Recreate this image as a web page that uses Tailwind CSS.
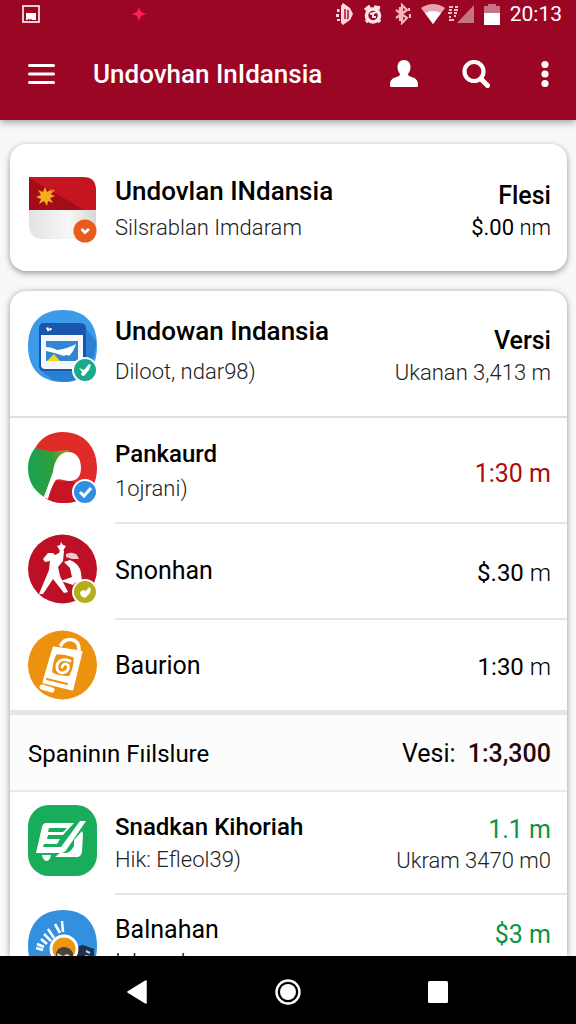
<!DOCTYPE html>
<html lang="id">
<head>
<meta charset="utf-8">
<meta name="viewport" content="width=device-width, initial-scale=1">
<title>Undovhan InIdansia</title>
<script src="https://cdn.jsdelivr.net/npm/@tailwindcss/browser@4"></script>
</head>
<body class="flex h-screen flex-col overflow-hidden bg-[#f8f8f9] font-['Roboto',sans-serif] text-black">

<header class="z-10 shrink-0 bg-[#9b0624] text-white shadow-[0_2px_8px_rgba(0,0,0,0.4)]">
  <div class="flex h-7 items-center pr-3.5 pl-[22px]">
    <svg class="size-[18px]" viewBox="0 0 18 18" aria-hidden="true"><rect x="1" y="1" width="16" height="16" fill="none" stroke="#fff" stroke-width="1.6"/><path d="M4 8h10v7H4z" fill="#fff"/><path d="M5.500 15l1-1.500 1.500 1.500 1-1.500 1 1.500" fill="#9b0624"/></svg>
    <svg class="ml-[92px] size-[14px]" viewBox="0 0 14 14" aria-hidden="true"><path d="M7 0l2 5 5 2-5 2-2 5-2-5-5-2 5-2z" fill="#ff2058"/></svg>
    <div class="ml-auto flex items-center">
      <svg class="h-[22px] w-5" viewBox="0 0 20 22" fill="#fbd9df" aria-hidden="true"><path d="M2 6h2.500v3H2zM1 11h3v3H1zM2 16h3v2H2zM8 0l7 5 3 6-3 6-7 5-2-2V3z"/><path d="M10 6v10M13 7v8l-1 1" stroke="#9b0624" stroke-width="1.400" fill="none"/></svg>
      <svg class="ml-2 h-[22px] w-5" viewBox="0 0 20 22" fill="none" aria-hidden="true"><circle cx="10" cy="12.500" r="6.500" stroke="#fde5e9" stroke-width="3.600"/><path d="M2 7l5-4M11 4l6 1M3 19l2-2M17 19l-2-2" stroke="#fde5e9" stroke-width="3.400"/><path d="M7 11l7-2M10 11v3h3" stroke="#fde5e9" stroke-width="2"/></svg>
      <svg class="ml-2.5 h-[22px] w-5" viewBox="0 0 20 22" fill="none" stroke="#f3b6c1" stroke-width="2.200" aria-hidden="true"><path d="M3 7l11 8-5 5V2l5 5L3 15M7 4v14M16 5v3M17 11v4"/></svg>
      <svg class="ml-2 h-5 w-6" viewBox="0 0 24 20" aria-hidden="true"><path d="M0 4Q12-4 24 4L12 20z" fill="#e7a5b1"/><path d="M4 9Q12 5 20 9L12 20z" fill="#fff"/></svg>
      <svg class="ml-0.5 h-5 w-[27px]" viewBox="0 0 27 20" aria-hidden="true"><path d="M27 1v18H10z" fill="#c57483"/><path d="M2 3h4M8 3h3M2 6h3M7 6h4M1 9h4M7 9h3M2 13h2M7 12h2M2 16h5" stroke="#f3bec7" stroke-width="1.800"/></svg>
      <svg class="ml-2.5 h-[21px] w-4" viewBox="0 0 16 21" aria-hidden="true"><path d="M4 0h8v2h4v8H0V2h4z" fill="#c57483"/><path d="M0 9h16v12H0z" fill="#fff"/></svg>
      <time class="ml-2.5 text-[21px] leading-7">20:13</time>
    </div>
  </div>
  <div class="flex h-[92px] items-center pr-[27px] pl-7">
    <button type="button" aria-label="Menu"><svg class="h-[22px] w-[27px]" viewBox="0 0 27 22" stroke="#fff" stroke-width="3" stroke-linecap="round" aria-hidden="true"><path d="M1.500 2.500h24M1.500 11h24M1.500 19.500h24"/></svg></button>
    <h1 class="ml-[38px] text-[26px] font-medium">Undovhan InIdansia</h1>
    <button type="button" class="ml-auto" aria-label="Akun"><svg class="size-7" viewBox="0 0 28 28" fill="#fff" aria-hidden="true"><path d="M14 0c4 0 6.500 3 6.500 7 0 3-1 5-2.500 7 0 2 2 2.500 5 3.500 4 1.500 5 4 5 8 0 1-.5 1.500-1.500 1.500h-25C.5 27 0 26.500 0 25.500c0-4 1-6.500 5-8 3-1 5-1.500 5-3.500-1.500-2-2.500-4-2.500-7C7.500 3 10 0 14 0z"/></svg></button>
    <button type="button" class="ml-11" aria-label="Cari"><svg class="size-7" viewBox="0 0 28 28" fill="none" stroke="#fff" stroke-linecap="round" aria-hidden="true"><circle cx="12" cy="11.500" r="9.500" stroke-width="4.200"/><path d="M19 19l6.500 6.500" stroke-width="5"/></svg></button>
    <button type="button" class="ml-[51px]" aria-label="Opsi lainnya"><svg class="h-7 w-2" viewBox="0 0 8 28" fill="#fff" aria-hidden="true"><circle cx="4" cy="4.500" r="3.600"/><circle cx="4" cy="14" r="3.600"/><circle cx="4" cy="23.500" r="3.600"/></svg></button>
  </div>
</header>

<main class="flex min-h-0 flex-1 flex-col gap-5 overflow-hidden pt-6 pr-[9px] pl-2.5">

  <section class="flex h-[127px] shrink-0 items-center rounded-2xl bg-white pr-4 pl-[18px] shadow-[0_2px_6px_rgba(0,0,0,0.4)]">
    <div class="relative shrink-0">
      <svg class="h-[62px] w-[69px]" viewBox="0 0 69 62" aria-hidden="true">
        <defs><linearGradient id="cloth"><stop offset="0" stop-color="#e2e2e4"/><stop offset=".6" stop-color="#f7f7f7"/><stop offset="1" stop-color="#d5d5d7"/></linearGradient></defs>
        <path d="M1 0h54q13 0 13 13v20H1z" fill="#c51521"/><path d="M1 1l55 32H1z" fill="#a30d18"/>
        <path d="M1 33h67v16q0 13-13 13H15Q1 62 1 47z" fill="url(#cloth)"/>
        <path d="M17 10l2 5 5-3-2 5 5 2-5 2 3 5-5-2-1 5-3-5-5 3 2-5-5-2 5-2-3-5 5 2z" fill="#f3ae1c"/><path d="M22 17l4-4" stroke="#f3ae1c" stroke-width="1.500"/>
      </svg>
      <svg class="absolute right-0 -bottom-1 size-6" viewBox="0 0 24 24" aria-hidden="true"><circle cx="12" cy="12" r="11.500" fill="#ea5b1b"/><path d="M8.500 10l3.500 3.500 4-3.500" fill="none" stroke="#fff" stroke-width="2.800"/></svg>
    </div>
    <div class="ml-[18px] min-w-0 flex-1 pt-1">
      <h2 class="text-[26px] leading-9 font-medium">Undovlan INdansia</h2>
      <p class="text-[22px] leading-[38px] font-light text-[#222]">Silsrablan Imdaram</p>
    </div>
    <div class="pt-2 text-right text-[22px] leading-8">
      <p class="text-[25px] font-medium">Flesi</p>
      <p class="font-light"><span class="font-normal">$.00</span> nm</p>
    </div>
  </section>

  <section class="min-h-0 flex-1 overflow-hidden rounded-t-2xl bg-white shadow-[0_1px_6px_rgba(0,0,0,0.4)]">
    <div class="flex h-[127px] items-start border-b-2 border-[#dedfe1] pr-4 pl-[18px]">
      <div class="relative mt-[18px] shrink-0">
        <svg class="h-[74px] w-[69px]" viewBox="0 0 69 74" aria-hidden="true">
          <path d="M35 1c22 0 34 13 34 36S57 73 35 73 0 60 0 37 13 1 35 1z" fill="#3b9bea"/>
          <path d="M58 20l10 12q0 20-13 32l-8 7q-10 4-22 0L12 61z" fill="#2a80d0"/>
          <path d="M16 14h36q6 0 6 6v42H16q-5 0-5-5V19q0-5 5-5z" fill="#1b56ad"/>
          <path d="M13 26h42v34H17q-4 0-4-4z" fill="#f4f7fb"/><path d="M18 32h32v20H18z" fill="#3285cf"/>
          <path d="M18 38q6 0 11 3 10-1 19-6-2 7-7 12-2-2-5 0-8-3-18-5z" fill="#fff"/><path d="M19 52l7-7 6 7z" fill="#f7d51e"/><path d="M18 19q3-2 3 1 2-2 3 0l-2 2-1-1-1 2" fill="#fff"/>
        </svg>
        <svg class="absolute -right-px bottom-0 size-[26px]" viewBox="0 0 26 26" aria-hidden="true"><circle cx="13" cy="13" r="12" fill="#1aa98b" stroke="#fff" stroke-width="2"/><path d="M7 11l5 2 5-6 2 1-2 5-5 6-3-1 1-3z" fill="#fff"/></svg>
      </div>
      <div class="ml-[18px] min-w-0 flex-1 pt-5">
        <h2 class="text-[26px] leading-10 font-medium">Undowan Indansia</h2>
        <p class="text-[22px] leading-[42px] font-light text-[#222]">Diloot, ndar98)</p>
      </div>
      <div class="pt-[34px] text-right text-[22px] leading-8">
        <p class="text-[25px] font-medium">Versi</p>
        <p class="font-light text-[#222]">Ukanan 3,413 m</p>
      </div>
    </div>

    <div class="flex h-[106px] pl-[18px]">
      <div class="relative mt-3.5 h-[72px] shrink-0">
        <svg class="h-[72px] w-[69px]" viewBox="0 0 69 72" aria-hidden="true">
          <defs><linearGradient id="leaf"><stop offset="0" stop-color="#17a253"/><stop offset=".6" stop-color="#2f9f3c"/><stop offset="1" stop-color="#a7a51f"/></linearGradient></defs>
          <path d="M35 0c20 0 34 14 34 36S55 71 35 71q-11 0-18-5L35 36 6 18Q15 0 35 0z" fill="#e02c29"/>
          <path d="M7 16q14 5 34 2L25 41 16 65Q0 55 0 36 0 25 7 16z" fill="url(#leaf)"/>
          <path d="M27 47q7 5 16 0l16 18q-10 6-24 6-9 0-17-5z" fill="#c71525"/>
          <path d="M40 20c9 0 13 7 13 16 0 8-4 13-11 13-6 0-11-3-14-1-3 3-6 12-8 19l-4-2 9-25c1-10 6-20 15-20z" fill="#fff"/>
        </svg>
        <svg class="absolute -right-px -bottom-px size-[26px]" viewBox="0 0 26 26" aria-hidden="true"><circle cx="13" cy="13" r="12" fill="#318ee5" stroke="#fff" stroke-width="2"/><path d="M8 13l4 4 7-8" fill="none" stroke="#fff" stroke-width="3"/></svg>
      </div>
      <div class="ml-[18px] flex flex-1 items-center border-b-2 border-[#e4e5e7] pr-4">
        <div class="min-w-0 flex-1 pt-0.5"><h3 class="text-[24px] leading-9 font-medium">Pankaurd</h3><p class="text-[22px] leading-[34px] font-light text-[#222]">1ojrani)</p></div>
        <p class="pt-2 text-[25px] text-[#a90d0d]">1:30 m</p>
      </div>
    </div>

    <div class="flex h-24 pl-[18px]">
      <div class="relative mt-2.5 h-[70px] shrink-0">
        <svg class="h-[70px] w-[69px]" viewBox="0 0 69 70" aria-hidden="true">
          <circle cx="34.500" cy="35" r="34.500" fill="#bd1026"/>
          <path d="M33 8l2 3 3 1-2 3-1 3h-3l-1-3-2-3 3-1z" fill="#fff"/>
          <path d="M15 25l5-6h5l2 2 4-2 1-2h4l-1 10-5 6 2 9 8 16-4 1-11-14-10 15-4 0 10-24 1-9-5 1z" fill="#fff"/>
          <path d="M38 20q10-4 13 5h-7l-6-2z" fill="#f5c7cb"/><path d="M36 28l6-2q10 4 11 13l1 9q-6-1-9 3l-12-4 11-4-2-9z" fill="#fff"/>
        </svg>
        <svg class="absolute -right-px -bottom-px size-[26px]" viewBox="0 0 26 26" aria-hidden="true"><circle cx="13" cy="13" r="12" fill="#b4ad1c" stroke="#fff" stroke-width="2"/><path d="M8 13l3-2 3 1 3-4 2 2-1 4-5 5-4-2z" fill="#fff"/></svg>
      </div>
      <div class="ml-[18px] flex flex-1 items-center border-b-2 border-[#e4e5e7] pr-4">
        <h3 class="flex-1 text-[25px]">Snonhan</h3>
        <p class="pt-1 text-[24px] font-light"><span class="font-normal">$.30</span> m</p>
      </div>
    </div>

    <div class="flex h-[95px] items-center border-b-[5px] border-[#e6e6ea] pr-4 pl-[18px]">
      <svg class="h-[70px] w-[69px] shrink-0" viewBox="0 0 69 70" fill="none" stroke-linejoin="round" stroke-linecap="round" aria-hidden="true">
        <circle cx="34.500" cy="35" r="34.500" fill="#ec920f"/>
        <path d="M33 15q4-7 12-5 6 2 6 9" stroke="#fff" stroke-width="3.600"/>
        <path d="M26 18l27 4-9 37-28-7z" fill="#fff" stroke="#fff" stroke-width="3"/>
        <path d="M14 57l10 3" stroke="#fff" stroke-width="5"/>
        <path d="M29 25q8 0 16 3 0 9-4 17-8 1-16-3 0-9 4-17z" fill="#ec920f" stroke="#ec920f" stroke-width="1.500"/>
        <path d="M42 31q-10-4-13 4-1 8 6 8 7-2 5-8-4-3-6 2" stroke="#fff" stroke-width="2.800"/>
        <path d="M19 49l20 5" stroke="#ec920f" stroke-width="2"/>
      </svg>
      <h3 class="ml-[18px] flex-1 pt-0.5 text-[25px]">Baurion</h3>
      <p class="pt-1 text-[24px] font-light"><span class="font-normal">1:30</span> m</p>
    </div>

    <div class="flex h-[77px] items-center border-b-2 border-[#e8e9eb] bg-[#fcfcfc] pt-0.5 pr-4 pl-[18px] text-[24px]">
      <h2 class="flex-1">Spaninın Fıilslure</h2>
      <p class="text-[25px]">Vesi: <strong class="ml-1.5 font-medium text-[#2a0505]">1:3,300</strong></p>
    </div>

    <div class="flex h-[103px] pl-[18px]">
      <svg class="mt-[13px] h-[71px] w-[69px] shrink-0" viewBox="0 0 69 71" aria-hidden="true">
        <rect width="69" height="71" rx="21" fill="#18ac5b"/>
        <path d="M18 18h28l-11 12H20l-1 4h13l-3 5H16l-1 3h18l19-26 6 0-19 28q-2 4-6 4H8l6-26q1-4 4-4z" fill="#fff"/>
        <path d="M21 23h18l-4 4H20z" fill="#18ac5b"/>
        <path d="M46 35l8-9 1 3-1 18q-1 5-5 5H27l5-4h6q4 0 8-7z" fill="#fff"/><path d="M14 50h9q-1 6-5 6-3-1-4-6z" fill="#fff"/>
      </svg>
      <div class="ml-[18px] flex flex-1 items-center border-b-2 border-[#e4e5e7] pr-4">
        <div class="min-w-0 flex-1"><h3 class="text-[24px] leading-[34px] font-medium">Snadkan Kihoriah</h3><p class="text-[22px] leading-8 font-light text-[#222]">Hik: Efleol39)</p></div>
        <div class="pt-1 text-right text-[22px] leading-[31px]"><p class="text-[25px] text-[#0b9444]">1.1 m</p><p class="font-light text-[#222]">Ukram 3470 m0</p></div>
      </div>
    </div>

    <div class="flex h-[105px] pl-[18px]">
      <svg class="mt-[15px] h-[72px] w-[69px] shrink-0" viewBox="0 0 69 72" aria-hidden="true">
        <path d="M35 0c22 0 34 14 34 36S57 72 35 72 0 58 0 36 13 0 35 0z" fill="#3290df"/>
        <path d="M8 38l7 2M9 34l7 3M13 29l6 5M16 24l7 7M20 19l6 9M27 14l5 9M34 11l1 11" stroke="#fff" stroke-width="2.600"/>
        <path d="M47 37l8-2 11 4v20H45z" fill="#1a304c"/><path d="M58 41l4 2M57 46l5 1" stroke="#b7d3ee" stroke-width="2"/>
        <circle cx="36" cy="39" r="13" fill="#eb9614" stroke="#fff" stroke-width="3"/><path d="M28 43q2-6 8-6t9 6l-1 11H28z" fill="#4c403a"/><path d="M29 43l6 3 4-2 5 3-4 8h-9z" fill="#ddd"/>
      </svg>
      <div class="ml-[18px] flex flex-1 items-start justify-between pt-4 pr-4">
        <div><h3 class="text-[25px] leading-[38px]">Balnahan</h3><p class="text-[22px] leading-[26px] font-light">Islanodan</p></div>
        <p class="pt-1.5 text-[25px] leading-9 text-[#0b9444]">$3 m</p>
      </div>
    </div>
  </section>
</main>

<nav class="z-10 grid h-[68px] shrink-0 grid-cols-[1fr_52px_1fr] items-center bg-black pt-1" aria-label="Navigasi sistem">
  <button type="button" class="mr-[115px] justify-self-end" aria-label="Kembali"><svg class="h-6 w-5" viewBox="0 0 20 24" aria-hidden="true"><path d="M19 1v22L1 12z" fill="#fff" stroke="#fff" stroke-width="1.500" stroke-linejoin="round"/></svg></button>
  <button type="button" class="justify-self-center" aria-label="Beranda"><svg class="size-[26px]" viewBox="0 0 26 26" aria-hidden="true"><circle cx="13" cy="13" r="11.500" fill="none" stroke="#fff" stroke-width="2.400"/><circle cx="13" cy="13" r="8" fill="#fff"/></svg></button>
  <button type="button" class="ml-[114px] justify-self-start" aria-label="Aplikasi terbaru"><svg class="h-[22px] w-5" viewBox="0 0 20 22" aria-hidden="true"><rect width="20" height="22" rx="1.500" fill="#fff"/></svg></button>
</nav>
</body>
</html>
